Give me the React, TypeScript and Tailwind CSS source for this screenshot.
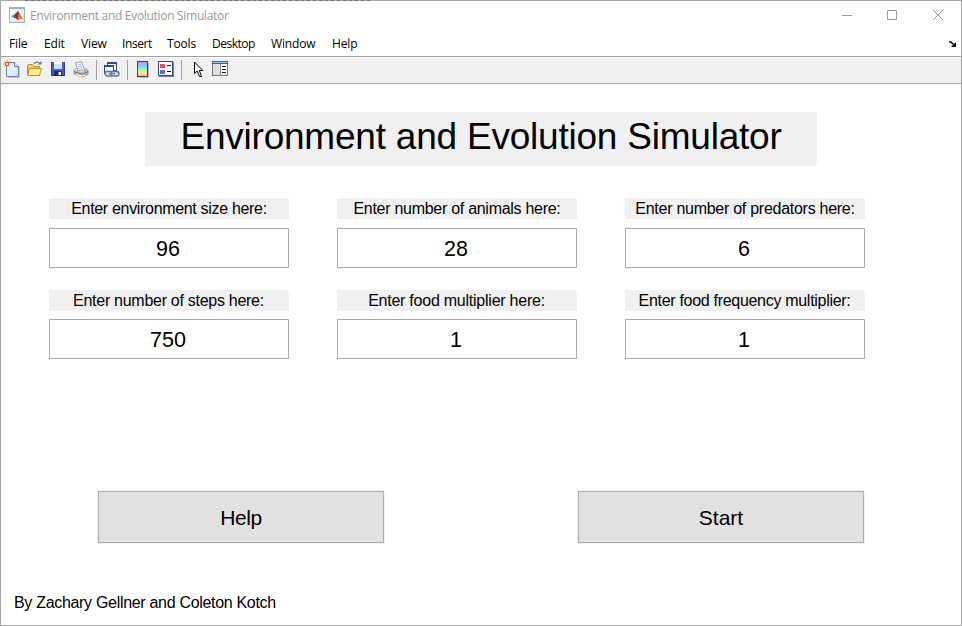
import React from "react";

const UI = "font-['Open_Sans','Noto_Sans',sans-serif]";

function MatlabIcon() {
  return (
    <svg width="16" height="16" viewBox="0 0 16 16">
      <defs>
        <linearGradient id="tile" x2="1" y2="1"><stop stopColor="#fff" /><stop offset="1" stopColor="#d9e0e8" /></linearGradient>
      </defs>
      <rect x=".5" y=".5" width="15" height="15" fill="url(#tile)" stroke="#a3afbd" />
      <rect x="0" y="0" width="16" height="2" fill="#8fb1d4" />
      <path d="M2 9.200 5.500 7.500 8 9 5.500 11z" fill="#4a86b8" />
      <path d="M5.500 7.500 9 4 8.500 8.500 5.500 11z" fill="#2b5580" />
      <path d="M9 4C10.500 5 11.500 9 14 12 12 11 11 11 9 13.500 8 12 7 11 5.500 11 7.500 9.500 8 6 9 4z" fill="#dc5c22" />
      <path d="M9 4 9.800 7 8.500 12.500C7.500 11.500 6.800 11 5.500 11 7.500 9.500 8 6 9 4z" fill="#8d3220" />
      <path d="M9.800 6.500 11.300 10.500 9.300 12z" fill="#f5a12c" />
    </svg>
  );
}

function NewIcon() {
  return (
    <svg width="17" height="18" viewBox="0 0 17 18">
      <defs>
        <linearGradient id="page" x2="1" y2="1"><stop stopColor="#fff" /><stop offset="1" stopColor="#cfe0f8" /></linearGradient>
      </defs>
      <path d="M3.500 2.500H11.500L15.500 6.500V16.500H3.500z" fill="url(#page)" stroke="#6480b4" />
      <path d="M16.500 7V17.500H5" fill="none" stroke="#bac4d4" />
      <path d="M11.500 2.500V6.500H15.500" fill="#e8f0fc" stroke="#6480b4" />
      <path d="M1 1 7 7M7 1 1 7M4 0V8M0 4H8" stroke="#eb9672" strokeWidth=".8" />
      <rect x="2.500" y="2.500" width="3" height="3" fill="#fff0b0" stroke="#dd5b34" />
    </svg>
  );
}

function OpenIcon() {
  return (
    <svg width="17" height="16" viewBox="0 0 17 16">
      <path d="M1.500 14V4.500L3 3.500H6.500L7.500 5.500H13.500V14z" fill="#f4d45a" stroke="#b88a1c" />
      <path d="M3.500 7.500H15.500L13.500 14.500H1.500z" fill="#ffed8b" stroke="#bd901f" />
      <path d="M8 3C9 .5 13 .5 14 3" fill="none" stroke="#6d8191" strokeWidth="1.200" />
      <path d="M11.500 3.500H15.500V0z" fill="#6d8191" />
    </svg>
  );
}

function SaveIcon() {
  return (
    <svg width="16" height="16" viewBox="0 0 16 16">
      <path d="M1 1H15V15H2L1 14z" fill="#4a5cc4" />
      <path d="M1.500 1V14.500H15M14.500 1V15" fill="none" stroke="#2b3a8c" />
      <path d="M4 1H12V8H4z" fill="#d6e0f4" />
      <path d="M4 1H12V3H4z" fill="#fff" />
      <path d="M4 10H12V15H4z" fill="#202b69" />
      <path d="M8.500 11H11V14H8.500z" fill="#fff" />
    </svg>
  );
}

function PrintIcon() {
  return (
    <svg width="16" height="17" viewBox="0 0 16 17">
      <path d="M1 9 4 7 13 7.500 15.300 10V13L9.500 16 1 13z" fill="#b4b4b7" stroke="#85858a" strokeWidth=".7" />
      <path d="M1 9 4 7 13 7.500 9.500 11.500z" fill="#e8e8e9" />
      <path d="M4.800 9.500 2.700 1.500 8.700 .8 11.500 9z" fill="#fbfbff" stroke="#8996ad" strokeWidth=".9" />
      <path d="M4.500 3.500 8.200 3M5 5.500 9 5M5.500 7.500 9.500 7" stroke="#a5b7db" />
      <path d="M1.500 11 9.500 13.300 15 10.700" fill="none" stroke="#6a6d73" strokeWidth=".9" />
      <path d="M3 13 8 15 12 13.800" fill="none" stroke="#f5f5f5" strokeWidth="1.300" />
    </svg>
  );
}

function LinkIcon() {
  return (
    <svg width="17" height="17" viewBox="0 0 17 17">
      <path d="M4.500 1.500H13.500V9.500H4.500z" fill="#f4f8ff" stroke="#294d8d" />
      <path d="M4 1H14V3H4z" fill="#294d8d" />
      <path d="M1.500 4.500H10.500V12.500H1.500z" fill="#eff4fb" stroke="#294d8d" />
      <path d="M1 4H11V6H1z" fill="#294d8d" />
      <rect x="2" y="10.500" width="8" height="4.500" rx="2.200" fill="#dce5ed" stroke="#60758d" strokeWidth="1.300" />
      <rect x="8" y="10.500" width="8" height="4.500" rx="2.200" fill="#dce5ed" stroke="#60758d" strokeWidth="1.300" />
      <path d="M6 12.800H12" stroke="#718397" strokeWidth="1.500" />
    </svg>
  );
}

function ColorbarIcon() {
  return (
    <svg width="12" height="17" viewBox="0 0 12 17">
      <defs>
        <linearGradient id="ramp" x1="0" y1="0" x2="0" y2="1">
          <stop stopColor="#a79be8" /><stop offset=".3" stopColor="#7fd0ec" />
          <stop offset=".55" stopColor="#b5ebb4" /><stop offset=".75" stopColor="#f7ee9c" />
          <stop offset="1" stopColor="#f0a890" />
        </linearGradient>
      </defs>
      <path d="M2 16.500H11.500V2" fill="none" stroke="#b5b8bf" />
      <rect x=".5" y=".5" width="10" height="15" fill="url(#ramp)" stroke="#29457d" />
    </svg>
  );
}

function LegendIcon() {
  return (
    <svg width="16" height="16" viewBox="0 0 16 16" shapeRendering="crispEdges">
      <rect x=".5" y=".5" width="14" height="14" fill="#fff" stroke="#2c4985" />
      <path d="M15 1V15H1" fill="none" stroke="#7586a8" />
      <path d="M2 3H7V7H2z" fill="#e25252" />
      <path d="M2 9H7V13H2z" fill="#6564e9" />
      <path d="M9 4H13V5H9zM9 10H13V11H9z" fill="#111" />
    </svg>
  );
}

function CursorIcon() {
  return (
    <svg width="11" height="17" viewBox="0 0 11 17">
      <path d="M1.500 1V12.500L4.200 10 6.500 15.500H8.500L6.300 9.500H9.800z" fill="#fff" stroke="#000" strokeWidth="1" />
    </svg>
  );
}

function PanelIcon() {
  return (
    <svg width="17" height="16" viewBox="0 0 17 16" shapeRendering="crispEdges">
      <rect x=".5" y=".5" width="15" height="14" fill="#dedede" stroke="#74777b" />
      <path d="M0 0H16V3H0z" fill="#3d6685" />
      <path d="M1 1H15V2H1z" fill="#8ccbe0" />
      <path d="M9 3H15V14H9z" fill="#fff" />
      <path d="M8 3H9V15H8z" fill="#8a8a8a" />
      <path d="M10 5H14V6H10zM10 8H14V9H10zM10 11H14V12H10z" fill="#111" />
    </svg>
  );
}

const Separator = ({ className }: { className: string }) => (
  <div className={`h-5 w-px bg-[#a0a0a0] ${className}`} />
);

const menus = [
  ["File", "w-[35px]"],
  ["Edit", "w-[37px]"],
  ["View", "w-[41px]"],
  ["Insert", "w-[45px] tracking-[-0.4px]"],
  ["Tools", "w-[45px]"],
  ["Desktop", "w-[59px] tracking-[-0.5px]"],
  ["Window", "w-[61px]"],
  ["Help", "w-[40px]"],
];

function Field({ label, value, gap, tracking }: { label: string; value: string; gap: string; tracking: string }) {
  return (
    <label className={`flex w-60 flex-col ${gap}`}>
      <span className={`block h-[21px] whitespace-nowrap bg-[#f0f0f0] text-center text-[16px] leading-[21px] ${tracking}`}>
        {label}
      </span>
      <input
        className="block h-10 w-full border border-[#ababab] bg-white pr-[2px] pt-[2px] text-center text-[21.5px] leading-[36px] outline-none"
        defaultValue={value}
      />
    </label>
  );
}

const buttonClass =
  "h-[54px] w-72 border border-[#f0f0f0] bg-[#adadad] p-px text-[21px]";

export default function App() {
  return (
    <div className="relative flex h-[626px] w-[962px] flex-col border border-[#a6a6a6] bg-white font-['Liberation_Sans',Arial,sans-serif] text-black">
      <div className="absolute -top-px left-6 h-px w-[348px] bg-[repeating-linear-gradient(90deg,#5f7565_0_3px,#a09aa4_3px_6px)]" />
      <header className={`flex h-[31px] shrink-0 items-start pl-2 ${UI}`}>
        <div className="mt-[6px]"><MatlabIcon /></div>
        <h1 className="ml-[5px] mt-[6px] whitespace-nowrap text-[12px] leading-[17px] tracking-[-0.3px] text-[#999]">
          Environment and Evolution Simulator
        </h1>
        <svg className="ml-auto mr-[17px] mt-[8px]" width="103" height="12" viewBox="0 0 103 12" fill="none" stroke="#999">
          <path d="M1 6.500H11M46.500 1.500H55.500V10.500H46.500zM92 1 102 11M102 1 92 11" />
        </svg>
      </header>
      <nav className={`flex h-6 shrink-0 items-center pl-2 text-[12px] tracking-[-0.15px] ${UI}`}>
        {menus.map(([name, width]) => (
          <span key={name} className={width}>{name}</span>
        ))}
        <svg className="ml-auto mr-[5px]" width="7" height="6" viewBox="0 0 7 6" fill="none" stroke="#000">
          <path d="M0 1H2L6 5" strokeWidth="1.500" />
          <path d="M7 1V6H2z" fill="#000" stroke="none" />
        </svg>
      </nav>
      <div className="flex h-7 shrink-0 items-center border-b border-t border-[#a0a0a0] bg-[#f0f0f0] pl-[2px] shadow-[inset_0_1px_0_#fff]">
        <div className="-mt-[2px]"><NewIcon /></div>
        <div className="-mt-[2px] ml-[6px]"><OpenIcon /></div>
        <div className="-mt-[2px] ml-[7px]"><SaveIcon /></div>
        <div className="-mt-[2px] ml-[7px]"><PrintIcon /></div>
        <Separator className="ml-[7px]" />
        <div className="-mt-[2px] ml-[6px]"><LinkIcon /></div>
        <Separator className="ml-[7px]" />
        <div className="-mt-[2px] ml-[9px]"><ColorbarIcon /></div>
        <div className="-mt-[2px] ml-[9px]"><LegendIcon /></div>
        <Separator className="ml-[7px]" />
        <div className="-mt-[2px] ml-[11px]"><CursorIcon /></div>
        <div className="-mt-[2px] ml-[8px]"><PanelIcon /></div>
      </div>
      <main className="flex flex-1 flex-col items-start">
        <h2 className="ml-36 mt-7 h-[54px] w-[672px] whitespace-nowrap bg-[#f0f0f0] text-center text-[37px] leading-[50px] tracking-[-0.22px]">
          Environment and Evolution Simulator
        </h2>
        <div className="ml-12 mt-8 flex gap-12">
          <Field label="Enter environment size here:" value="96" gap="gap-[9px]" tracking="tracking-[-0.32px]" />
          <Field label="Enter number of animals here:" value="28" gap="gap-[9px]" tracking="tracking-[-0.28px]" />
          <Field label="Enter number of predators here:" value="6" gap="gap-[9px]" tracking="tracking-[-0.27px]" />
        </div>
        <div className="ml-12 mt-[22px] flex gap-12">
          <Field label="Enter number of steps here:" value="750" gap="gap-2" tracking="tracking-[-0.28px] pr-px" />
          <Field label="Enter food multiplier here:" value="1" gap="gap-2" tracking="tracking-[-0.24px] pr-px" />
          <Field label="Enter food frequency multiplier:" value="1" gap="gap-2" tracking="tracking-[-0.3px] pr-px" />
        </div>
        <div className="ml-24 mt-[131px] flex gap-48">
          <button className={buttonClass}>
            <span className="flex h-full items-center justify-center bg-[#e1e1e1] pt-[2px] tracking-[-0.45px]">Help</span>
          </button>
          <button className={buttonClass}>
            <span className="flex h-full items-center justify-center bg-[#e1e1e1] pt-[2px]">Start</span>
          </button>
        </div>
        <p className="ml-[13px] mt-[49px] whitespace-nowrap text-[16px] leading-[20px] tracking-[-0.31px]">
          By Zachary Gellner and Coleton Kotch
        </p>
      </main>
    </div>
  );
}
